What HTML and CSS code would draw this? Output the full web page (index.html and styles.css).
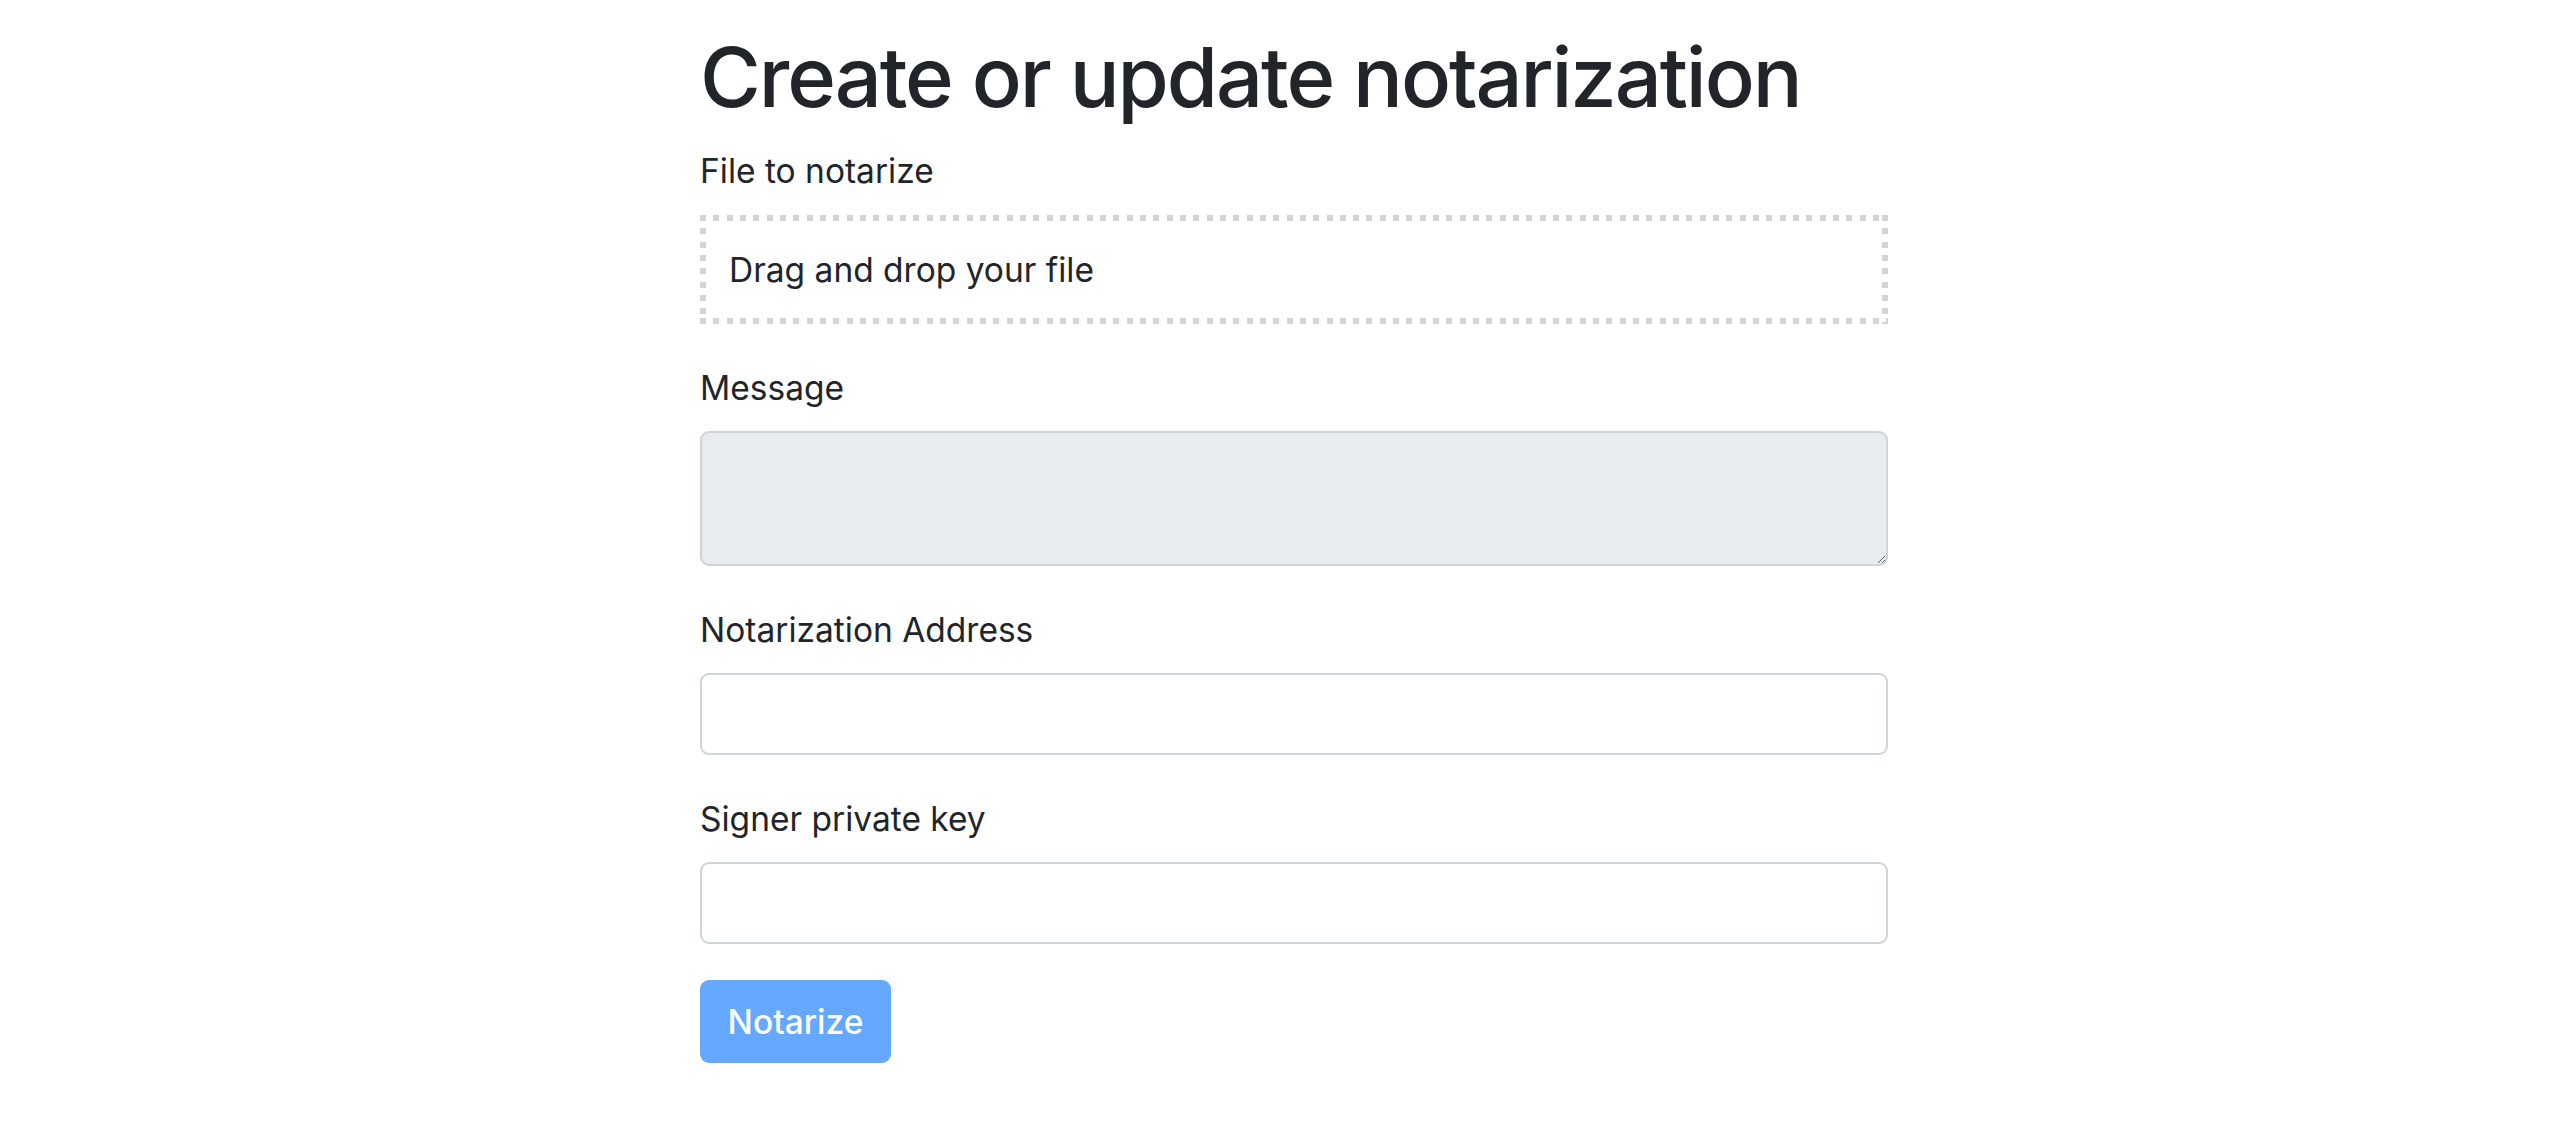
FILE: index.html
```html
<!DOCTYPE html>
<html lang="en">
<head>
<meta charset="utf-8">
<title>Create or update notarization</title>
<link rel="stylesheet" href="styles.css">
</head>
<body>
<main class="container">
  <h1 class="title">Create or update notarization</h1>
  <form class="form">
    <div class="form-group">
      <label class="label">File to notarize</label>
      <div class="dropzone">Drag and drop your file</div>
    </div>
    <div class="form-group">
      <label class="label" for="msg">Message</label>
      <textarea id="msg" class="control textarea" readonly></textarea>
    </div>
    <div class="form-group">
      <label class="label" for="addr">Notarization Address</label>
      <input id="addr" class="control input" type="text">
    </div>
    <div class="form-group">
      <label class="label" for="key">Signer private key</label>
      <input id="key" class="control input" type="text">
    </div>
    <button type="button" class="btn" disabled>Notarize</button>
  </form>
</main>
</body>
</html>
```
FILE: styles.css
```css
html, body {
  margin: 0;
  padding: 0;
  background: #ffffff;
}
body {
  font-family: Inter, "Liberation Sans", sans-serif;
  color: #212529;
}
.container {
  width: 1188px;
  margin-left: 700px;
}
.title {
  font-size: 83px;
  font-weight: 500;
  line-height: 107px;
  margin: 24px 0 15px;
  letter-spacing: -2.1px;
  white-space: nowrap;
}
.form {
  display: flex;
  flex-direction: column;
  align-items: flex-start;
}
.form-group {
  display: flex;
  flex-direction: column;
  width: 100%;
  margin-bottom: 39px;
}
.form-group:last-of-type {
  margin-bottom: 36px;
}
.label {
  font-size: 33.5px;
  line-height: 50px;
  margin-bottom: 18px;
}
.form-group:first-child .label {
  margin-bottom: 19px;
}
.dropzone {
  box-sizing: border-box;
  height: 109px;
  padding: 30px 29px 29px;
  font-size: 33.5px;
  line-height: 50px;
  background:
    repeating-linear-gradient(90deg, #d4d4d4 0 6px, transparent 6px 13.33px) top left / 100% 6px no-repeat,
    repeating-linear-gradient(90deg, #d4d4d4 0 6px, transparent 6px 13.33px) bottom left / 100% 6px no-repeat,
    repeating-linear-gradient(180deg, #d4d4d4 0 6px, transparent 6px 13.33px) top left / 6px 100% no-repeat,
    repeating-linear-gradient(180deg, #d4d4d4 0 6px, transparent 6px 13.33px) top right / 6px 100% no-repeat;
}
.control {
  box-sizing: border-box;
  width: 100%;
  margin: 0;
  border: 2px solid #ced4da;
  border-radius: 9px;
  font-family: inherit;
  font-size: 33px;
  color: #495057;
  padding: 12px 26px;
  outline: none;
}
.textarea {
  height: 135px;
  background: #e9ecef;
  resize: vertical;
  display: block;
}
.input {
  height: 82px;
  background: #ffffff;
}
.btn {
  box-sizing: border-box;
  height: 83px;
  width: 191px;
  border: 0;
  border-radius: 9px;
  background: #64a9ff;
  color: #ffffff;
  font-family: inherit;
  font-size: 33.5px;
  font-weight: 500;
  line-height: 50px;
  padding: 0;
}
```
